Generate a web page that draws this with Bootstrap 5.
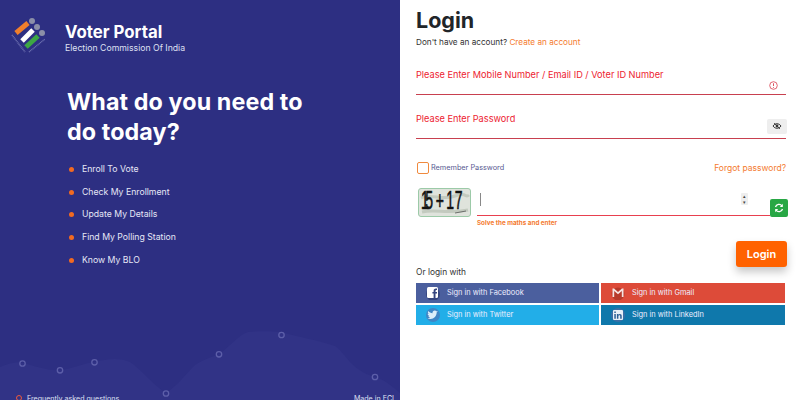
<!DOCTYPE html>
<html lang="en">
<head>
<meta charset="utf-8">
<title>Voter Portal</title>
<link href="https://cdn.jsdelivr.net/npm/bootstrap@5.3.0/dist/css/bootstrap.min.css" rel="stylesheet">
<style>
html,body{height:400px;overflow:hidden;font-family:"Inter",sans-serif;background:#fff}
.stage{height:400px;width:800px;overflow:hidden}
.side{width:400px;height:400px;background:#2d2f82;color:#fff;overflow:hidden;flex:none}
.waves{position:absolute;left:0;bottom:0;width:400px;height:80px}
.brand{padding:17px 0 0 11px;gap:19px}
.brand h1{font-size:16.800px;font-weight:700;line-height:19px;margin:0 0 1px;padding-top:6px}
.brand p{font-size:8.700px;margin:0;line-height:11px;color:#dfe0f2}
.ask{font-size:23.300px;font-weight:700;line-height:29.500px;margin:33px 0 0 67px;letter-spacing:.1px}
.tasks{margin:12px 0 0 69px;padding:0;list-style:none;font-size:8.700px;color:#e6e7f6}
.tasks li{display:flex;align-items:center;gap:8px;height:22.800px}
.tasks li::before{content:"";width:5px;height:5px;border-radius:50%;background:#f26a21}
.foot{position:absolute;left:16px;right:6px;bottom:-4px;font-size:7.100px;line-height:10px;color:#dfe0f2}
.foot i{display:inline-block;width:6px;height:6px;border:1.500px solid #ef5a3c;border-radius:50%;margin-right:5px}
.main{width:400px;height:400px;padding:0 14px 0 16px;flex:none}
.main h2{font-size:21.500px;font-weight:700;line-height:29px;margin:6px 0 0;color:#212529}
.hint{font-size:8.200px;line-height:11px;margin:2px 0 3px;color:#333}
.accent{color:#f47b30;text-decoration:none}
.entry{height:44px;border-bottom:1px solid #c8404f;font-size:9.200px;color:#ed1c30;line-height:12px;position:relative}
.entry span{position:absolute;left:0;top:18px}
.alert-mark{position:absolute;right:8px;top:30px;width:9px;height:9px}
.peek{position:absolute;right:-1px;bottom:4px;width:20px;height:15px;background:#eee;border-radius:2px;padding:3px 5px;line-height:0}
.keep{margin-top:21px;height:16px;font-size:7.300px;color:#585a92}
.tick{width:12px;height:12px;border:1px solid #f08a3e;border-radius:2px;margin-left:1px;margin-right:2px}
.forgot{font-size:8.500px}
.puzzle{margin:12px -2px 0 2px}
.pic{width:53px;height:29px;border:1px solid #9ccaa8;border-radius:3px;background:#dfe3dc;overflow:hidden;flex:none}
.answer{height:28px;margin-left:6px;flex:1;border-bottom:1px solid #e8404f;position:relative}
.caret{position:absolute;left:3px;top:5px;width:1px;height:13px;background:#888}
.spin{position:absolute;right:22px;top:5px;width:7px;height:12px;background:#eee;color:#444;font-size:5px;line-height:6px;text-align:center;border-radius:1px}
.swap{width:18px;height:18px;background:#28a745;border-radius:2px;margin-top:11px;flex:none;padding:4px}
.note{font-size:6.300px;font-weight:700;color:#f47b30;margin:2px 0 0 61px;line-height:8px}
.send{display:block;margin:14px -1px 0 auto;width:51px;height:26px;background:#ff6200;color:#fff;font-size:11px;font-weight:600;border:0;border-radius:3px;box-shadow:0 5px 8px rgba(0,0,0,.22);padding:0}
.other{font-size:8.400px;line-height:11px;color:#333;margin:0 0 5px}
.socials{display:grid;grid-template-columns:183px 184px;gap:2px}
.soc{height:20px;display:flex;align-items:center;font-size:7.400px;color:#eef;padding-left:10px;gap:7px;text-decoration:none}
.soc svg{flex:none}
.fb{background:#4b5f9e}.gm{background:#dd4b39}.tw{background:#22aee8}.li{background:#0f78ab}
</style>
</head>
<body>
<div class="stage d-flex">
  <section class="side position-relative">
    <svg class="waves" viewBox="0 0 400 80">
      <path d="M0 47C8 44 16 41 23 43C35 46 48 51 60 50C72 49 84 43 95 42C105 39 120 37 130 42C142 50 154 66 166 73C176 67 186 54 195 45C204 39 212 37 219 34C230 27 238 15 248 12C258 11 272 11 281 12C298 17 318 20 335 26C345 32 350 50 375 57C385 60 392 66 400 73V80H0Z" fill="#313386"/>
      <g fill="none" stroke="#5d5fa9" stroke-width="1.300">
        <circle cx="22.500" cy="43.500" r="2.700"/><circle cx="60" cy="50.300" r="2.700"/><circle cx="94.500" cy="42.300" r="2.700"/><circle cx="166" cy="73.500" r="2.700"/><circle cx="219" cy="34.300" r="2.700"/><circle cx="281.500" cy="15" r="2.700"/><circle cx="375" cy="57" r="2.700"/>
      </g>
    </svg>
    <div class="brand d-flex align-items-start position-relative">
      <svg width="35" height="36" viewBox="0 0 35 36">
        <path d="M5 16 17 6" stroke="#f07f2c" stroke-width="5"/>
        <path d="M11 24 22 13" stroke="#fff" stroke-width="5"/>
        <path d="M15 30 27 19" stroke="#3da644" stroke-width="5"/>
        <circle cx="21" cy="4" r="3" fill="#8b8fa8"/><circle cx="26" cy="10" r="3" fill="#8b8fa8"/><circle cx="31" cy="16" r="3" fill="#8b8fa8"/>
        <path d="M1 18 14 35M18 35 34 22" stroke="#6d70b0" stroke-width="1.500" stroke-dasharray="1 .6" fill="none"/>
      </svg>
      <div>
        <h1>Voter Portal</h1>
        <p>Election Commission Of India</p>
      </div>
    </div>
    <h2 class="ask position-relative">What do you need to<br>do today?</h2>
    <ul class="tasks position-relative">
      <li>Enroll To Vote</li>
      <li>Check My Enrollment</li>
      <li>Update My Details</li>
      <li>Find My Polling Station</li>
      <li>Know My BLO</li>
    </ul>
    <div class="foot d-flex justify-content-between">
      <span><i></i>Frequently asked questions</span>
      <span>Made in ECI</span>
    </div>
  </section>

  <main class="main">
    <h2>Login</h2>
    <p class="hint">Don't have an account? <a class="accent" href="#">Create an account</a></p>
    <div class="entry"><span>Please Enter Mobile Number / Email ID / Voter ID Number</span>
      <svg class="alert-mark" viewBox="0 0 9 9"><circle cx="4.500" cy="4.500" r="3.800" fill="none" stroke="#d9404f" stroke-width=".8"/><path d="M4.500 2.300V5M4.500 6V6.800" stroke="#d9404f" stroke-width=".9"/></svg>
    </div>
    <div class="entry"><span>Please Enter Password</span>
      <div class="peek"><svg width="10" height="8" viewBox="0 0 10 8"><path d="M1 4C3 1 7 1 9 4 7 7 3 7 1 4Z" fill="none" stroke="#333" stroke-width="1"/><circle cx="5" cy="4" r="1.400" fill="#333"/><path d="M2 1 8 7" stroke="#333" stroke-width=".8"/></svg></div>
    </div>
    <div class="keep d-flex align-items-center">
      <span class="tick"></span><span>Remember Password</span>
      <a class="accent forgot ms-auto" href="#">Forgot password?</a>
    </div>
    <div class="puzzle d-flex">
      <div class="pic"><svg width="51" height="27" viewBox="0 0 51 27"><path d="M2 9C12 4 24 12 36 7S46 10 50 6M3 23C16 20 28 25 49 21" stroke="#c3cabf" stroke-width="3" fill="none"/><path d="M36 24 47 22" stroke="#555" stroke-width=".8"/><text transform="scale(.7 1.25)" y="16" x="3 9 24 39 51" font-family="Liberation Sans, sans-serif" font-size="20" fill="#111" stroke="#111" stroke-width=".5">15+17</text></svg></div>
      <div class="answer"><span class="caret"></span><span class="spin">▴<br>▾</span></div>
      <div class="swap"><svg width="10" height="10" viewBox="0 0 10 10" class="d-block"><path d="M1.500 4A3.600 3.600 0 0 1 8 3M8.500 6A3.600 3.600 0 0 1 2 7" fill="none" stroke="#fff" stroke-width="1.300"/><path d="M8.800 .8V4H5.800ZM1.200 9.200V6H4.200Z" fill="#fff"/></svg></div>
    </div>
    <p class="note">Solve the maths and enter</p>
    <button class="send" type="button">Login</button>
    <p class="other">Or login with</p>
    <div class="socials">
      <a class="soc fb" href="#"><svg width="14" height="14" viewBox="0 0 14 14"><circle cx="7" cy="8" r="7" fill="#36467f"/><rect x="1" y="1" width="11" height="11" rx="1.500" fill="#fff"/><path d="M9.500 12V7.600H11V6H9.500V5C9.500 4.400 9.800 4.100 10.400 4.100H11V2.600H10C8.400 2.600 7.600 3.500 7.600 4.900V6H6.400V7.600H7.600V12Z" fill="#36467f"/></svg>Sign in with Facebook</a>
      <a class="soc gm" href="#"><svg width="14" height="14" viewBox="0 0 14 14"><circle cx="7" cy="8" r="6.500" fill="#b73a2b"/><path d="M1.500 11V2.500H3L7 6 11 2.500H12.500V11H10.800V5L7 8.200 3.200 5V11Z" fill="#f5e4e2"/></svg>Sign in with Gmail</a>
      <a class="soc tw" href="#"><svg width="14" height="14" viewBox="0 0 14 14"><circle cx="7" cy="7" r="7" fill="#3f86c6"/><path d="M12 3.500 10.700 4.300C10.700 8 8 11 4.500 11 3.300 11 2.300 10.700 1.500 10.200 2.600 10.200 3.500 9.900 4.300 9.300 3.300 9.200 2.600 8.700 2.300 7.900L3.300 7.800C2.300 7.400 1.700 6.700 1.700 5.700L2.600 5.900C1.800 5 1.700 4 2.200 3.100 3.400 4.500 4.800 5.200 6.500 5.300 6.200 3.700 7.500 2.500 8.800 2.500 9.500 2.500 10 2.800 10.400 3.200Z" fill="#dceefa"/></svg>Sign in with Twitter</a>
      <a class="soc li" href="#"><svg width="14" height="14" viewBox="0 0 14 14"><circle cx="7" cy="7" r="7" fill="#3c6fa6"/><rect x="2" y="2" width="10" height="10" rx="1" fill="#e8f0f7"/><path d="M3.300 6H4.800V10.800H3.300ZM3.300 3.500H4.800V5H3.300ZM5.900 6H7.300V6.700C7.700 6.100 8.200 5.900 8.900 5.900 10.100 5.900 10.700 6.700 10.700 8V10.800H9.200V8.300C9.200 7.600 9 7.200 8.400 7.200 7.800 7.200 7.400 7.600 7.400 8.300V10.800H5.900Z" fill="#2c5f95"/></svg>Sign in with LinkedIn</a>
    </div>
  </main>
</div>
</body>
</html>
